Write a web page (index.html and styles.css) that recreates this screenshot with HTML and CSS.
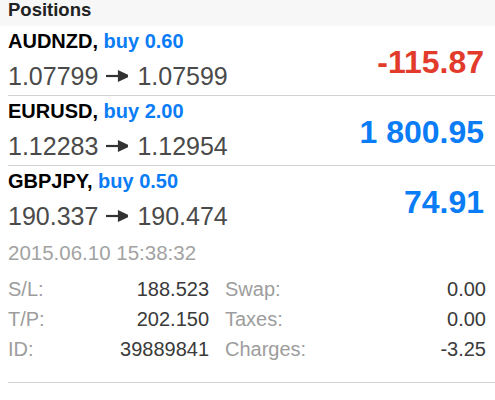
FILE: index.html
```html
<!DOCTYPE html>
<html lang="en">
<head>
<meta charset="utf-8">
<title>Positions</title>
<link rel="stylesheet" href="styles.css">
</head>
<body>
<div class="list">
  <div class="section-header">Positions</div>

  <div class="position">
    <div class="summary">
      <div class="info">
        <div class="title"><span class="symbol">AUDNZD,</span> <span class="type">buy 0.60</span></div>
        <div class="prices">1.07799<svg class="arrow" viewBox="0 0 22 12" width="22" height="12" aria-label="→"><path d="M0 6H15" /><polygon points="13,1.8 22,6 13,10.2" /></svg>1.07599</div>
      </div>
      <div class="profit loss">-115.87</div>
    </div>
  </div>

  <div class="position">
    <div class="summary">
      <div class="info">
        <div class="title"><span class="symbol">EURUSD,</span> <span class="type">buy 2.00</span></div>
        <div class="prices">1.12283<svg class="arrow" viewBox="0 0 22 12" width="22" height="12" aria-label="→"><path d="M0 6H15" /><polygon points="13,1.8 22,6 13,10.2" /></svg>1.12954</div>
      </div>
      <div class="profit gain">1 800.95</div>
    </div>
  </div>

  <div class="position expanded">
    <div class="summary">
      <div class="info">
        <div class="title"><span class="symbol">GBPJPY,</span> <span class="type">buy 0.50</span></div>
        <div class="prices">190.337<svg class="arrow" viewBox="0 0 22 12" width="22" height="12" aria-label="→"><path d="M0 6H15" /><polygon points="13,1.8 22,6 13,10.2" /></svg>190.474</div>
      </div>
      <div class="profit gain">74.91</div>
    </div>
    <div class="time">2015.06.10 15:38:32</div>
    <div class="details">
      <div class="pair"><span class="label">S/L:</span><span class="value">188.523</span></div>
      <div class="pair"><span class="label">Swap:</span><span class="value">0.00</span></div>
      <div class="pair"><span class="label">T/P:</span><span class="value">202.150</span></div>
      <div class="pair"><span class="label">Taxes:</span><span class="value">0.00</span></div>
      <div class="pair"><span class="label">ID:</span><span class="value">39889841</span></div>
      <div class="pair"><span class="label">Charges:</span><span class="value">-3.25</span></div>
    </div>
  </div>

  <div class="position">
    <div class="summary">
      <div class="info">
        <div class="title"><span class="symbol">GBPUSD,</span> <span class="type">buy 1.00</span></div>
      </div>
    </div>
  </div>
</div>
</body>
</html>
```

FILE: styles.css
```css
html, body {
  margin: 0;
  padding: 0;
  background: #ffffff;
}

body {
  font-family: "Liberation Sans", Arial, Helvetica, sans-serif;
  overflow: hidden;
}

.list {
  display: flex;
  flex-direction: column;
}

.section-header {
  background: #f7f7f7;
  color: #222222;
  font-size: 18.5px;
  font-weight: bold;
  line-height: 20px;
  padding: 0 8px 6px 8px;
  height: 20px;
}

.position {
  margin-left: 8px;
  border-bottom: 1px solid #d2d2d6;
  display: flex;
  flex-direction: column;
}

.summary {
  display: flex;
  align-items: center;
  justify-content: space-between;
  height: 69px;
  padding-right: 11px;
}

.info {
  display: flex;
  flex-direction: column;
}

.title {
  font-size: 20px;
  font-weight: bold;
  line-height: 31px;
  white-space: nowrap;
}

.symbol {
  color: #000000;
}

.type {
  color: #0a7cf6;
}

.prices {
  font-size: 25px;
  line-height: 38px;
  color: #4a4a4a;
  white-space: nowrap;
}

.arrow {
  margin: 0 9px 0 8px;
  vertical-align: 3px;
  fill: #333333;
  stroke: #333333;
  stroke-width: 2.2;
}

.profit {
  font-size: 32px;
  font-weight: bold;
  line-height: 32px;
  padding-top: 2px;
  white-space: nowrap;
}

.profit.loss {
  color: #e23b2c;
}

.profit.gain {
  color: #0a7cf6;
}

.expanded {
  padding-bottom: 18px;
}

.time {
  margin-top: 3px;
  font-size: 20.5px;
  line-height: 30px;
  color: #a3a3a3;
}

.details {
  margin-top: 6px;
  display: grid;
  grid-template-columns: 201px 1fr;
  column-gap: 16px;
  padding-right: 9px;
  font-size: 20px;
  line-height: 30px;
}

.pair {
  display: flex;
  justify-content: space-between;
}

.label {
  color: #9d9d9d;
}

.value {
  color: #3a3a3a;
}
```
